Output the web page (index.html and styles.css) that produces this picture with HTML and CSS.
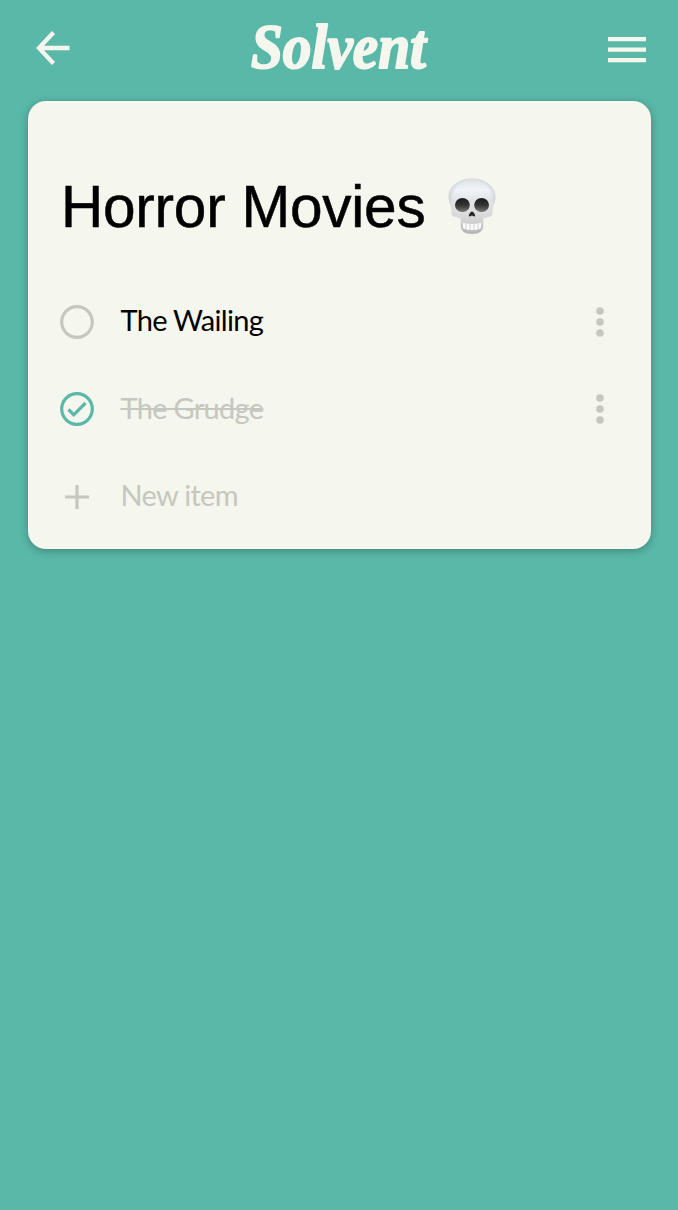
FILE: index.html
```html
<!DOCTYPE html>
<html lang="en">
<head>
<meta charset="utf-8">
<title>Solvent</title>
<link rel="stylesheet" href="styles.css">
</head>
<body>
<header class="bar">
  <svg class="back" viewBox="0 0 34 34"><path d="M33.500 17H3M17.500 1.500L3 17L17.500 32.500" /></svg>
  <svg class="logo" viewBox="0 0 190 90"><text x="7" y="68" textLength="175" lengthAdjust="spacingAndGlyphs">Solvent</text></svg>
  <svg class="menu" viewBox="0 0 38 26"><path d="M0 2.200H38M0 12.700H38M0 23.200H38" /></svg>
</header>
<main class="card">
  <h1 class="title"><span class="title-text">Horror Movies</span>
    <svg class="skull" viewBox="0 0 48 57">
      <defs>
        <linearGradient id="bone" x1="0" y1="0" x2="0" y2="1">
          <stop offset="0" stop-color="#dde1e5"/><stop offset=".2" stop-color="#f1f5f9"/><stop offset=".38" stop-color="#e2e5e8"/><stop offset=".6" stop-color="#dedede"/><stop offset="1" stop-color="#c2c2c2"/>
        </linearGradient>
        <radialGradient id="edge" cx=".5" cy=".45" r=".58">
          <stop offset=".7" stop-color="#999" stop-opacity="0"/><stop offset="1" stop-color="#8c8f92" stop-opacity=".4"/>
        </radialGradient>
        <linearGradient id="eye" x1="0" y1="0" x2="0" y2="1">
          <stop offset="0" stop-color="#1c1c1c"/><stop offset=".5" stop-color="#333"/><stop offset="1" stop-color="#777"/>
        </linearGradient>
      </defs>
      <path fill="url(#bone)" d="M24 .5C37 .5 47.500 8 47.500 19C47.500 24 45 27 44.600 31C44.300 35 45 37 42 38.500C39.500 39.500 36.500 39 35.500 41C34.800 43 35.500 45 35.300 48C35 53 31 56 24 56S13 53 12.700 48C12.500 45 13.200 43 12.500 41C11.500 39 8.500 39.500 6 38.500C3 37 3.700 35 3.400 31C3 27 .5 24 .5 19C.5 8 11 .5 24 .5Z"/>
      <path fill="url(#edge)" d="M24 .5C37 .5 47.500 8 47.500 19C47.500 24 45 27 44.600 31C44.300 35 45 37 42 38.500C39.500 39.500 36.500 39 35.500 41C34.800 43 35.500 45 35.300 48C35 53 31 56 24 56S13 53 12.700 48C12.500 45 13.200 43 12.500 41C11.500 39 8.500 39.500 6 38.500C3 37 3.700 35 3.400 31C3 27 .5 24 .5 19C.5 8 11 .5 24 .5Z"/>
      <ellipse cx="14.400" cy="27" rx="7.400" ry="7" fill="url(#eye)"/>
      <ellipse cx="33.600" cy="27" rx="7.400" ry="7" fill="url(#eye)"/>
      <path d="M24 33.500C25.500 33.500 27.800 37 27 38.200C26 39.200 25 37.500 24 37.500S22 39.200 21 38.200C20.200 37 22.500 33.500 24 33.500Z" fill="#2b2424"/>
      <path d="M14.800 45Q24 47 33.200 45L32.800 50.500Q24 53.500 15.200 50.500Z" fill="#fafafa"/>
      <path d="M18 45.500V51.500M22 46V52M26 46V52M30 45.500V51.500" stroke="#c4c4c4" stroke-width=".8"/>
    </svg>
  </h1>
  <ul class="list">
    <li class="item">
      <svg class="mark" viewBox="0 0 34 34"><circle cx="17" cy="17" r="15.300"/></svg>
      <span class="label wailing">The Wailing</span>
      <svg class="dots" viewBox="0 0 8 30"><circle cx="4" cy="4" r="3.800"/><circle cx="4" cy="15" r="3.800"/><circle cx="4" cy="26" r="3.800"/></svg>
    </li>
    <li class="item done">
      <svg class="mark" viewBox="0 0 34 34"><circle cx="17" cy="17" r="15.300"/><path d="M8.500 17.500L13.800 22.800L25.500 11"/></svg>
      <span class="label"><span class="struck">The Grudge</span></span>
      <svg class="dots" viewBox="0 0 8 30"><circle cx="4" cy="4" r="3.800"/><circle cx="4" cy="15" r="3.800"/><circle cx="4" cy="26" r="3.800"/></svg>
    </li>
    <li class="item new">
      <svg class="mark" viewBox="0 0 34 34"><path d="M5 17H29M17 5V29"/></svg>
      <span class="label">New item</span>
    </li>
  </ul>
</main>
</body>
</html>
```
FILE: styles.css
```css
* { box-sizing: border-box; }
body {
  margin: 0;
  min-height: 1210px;
  background: #59b8a8;
  font-family: Lato, "Open Sans", sans-serif;
  color: #000;
}
svg { display: block; flex: none; }
.bar {
  height: 101px;
  padding: 0 32px 5px 36px;
  display: flex;
  align-items: center;
  justify-content: space-between;
}
.back { width: 34px; height: 34px; }
.menu { width: 38px; height: 26px; margin-top: 4px; }
.back path, .menu path { fill: none; stroke: #f5f6ed; stroke-width: 4.3; }
.logo { width: 190px; height: 90px; margin-top: -6px; }
.logo text {
  font: italic bold 63px "Liberation Serif", serif;
  fill: #f5f6ed;
  stroke: #f5f6ed;
  stroke-width: 2;
  stroke-linejoin: round;
}
.card {
  width: 623px;
  height: 448px;
  margin-left: 28px;
  padding: 73px 32px 0;
  border-radius: 18px;
  background: #f5f6ed;
  box-shadow: 0 2px 8px rgba(0, 0, 0, .28);
}
.title {
  margin: 0;
  height: 66px;
  display: flex;
  align-items: center;
  font: 400 58.500px/66px "Liberation Sans", Arial, sans-serif;
}
.title-text {
  width: 388px;
  padding-left: 1px;
  letter-spacing: -.22px;
  white-space: nowrap;
  -webkit-text-stroke: .5px #000;
}
.skull { width: 48px; height: 57px; margin-top: -2px; }
.list { list-style: none; margin: 38px 0 0; padding: 0; }
.item { height: 87.500px; display: flex; align-items: center; }
.mark { width: 34px; height: 34px; fill: none; stroke: #c6c7bf; stroke-width: 3.2; }
.done .mark { stroke: #59b8a8; }
.label {
  flex: 1;
  margin-left: 26.500px;
  padding-bottom: 3px;
  font-size: 29px;
  line-height: 40px;
  letter-spacing: -.7px;
  white-space: nowrap;
}
.struck { text-decoration: line-through; text-decoration-thickness: 2px; }
.done .label, .new .label { color: #c6c7bf; }
.dots { width: 8px; height: 30px; margin-right: 15px; fill: #c6c7bf; }
```
